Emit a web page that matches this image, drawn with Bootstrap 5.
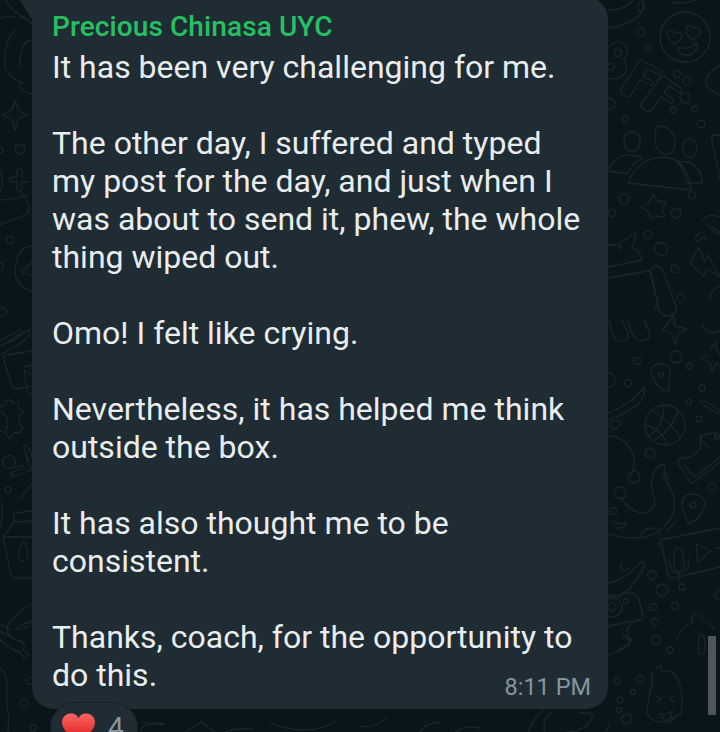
<!doctype html>
<html lang="en">
<head>
<meta charset="utf-8">
<title>Chat</title>
<link href="https://cdn.jsdelivr.net/npm/bootstrap@5.3.0/dist/css/bootstrap.min.css" rel="stylesheet">
<style>
html,body{height:732px;overflow:hidden;margin:0}
body{background:#0a151b;font-family:Roboto,"Liberation Sans",sans-serif;position:relative}
.wallpaper{position:absolute;left:0;top:0;width:720px;height:732px}
.wallpaper *{fill:none;stroke:#19262c;stroke-width:1.3;stroke-linecap:round;stroke-linejoin:round}
.chat-col{position:relative;width:576px;margin:-3px 0 0 32px}
.msg-tail{position:absolute;left:-14px;top:0;width:15px;height:24px}
.msg-bubble{background:#202c33;border-radius:0 22px 22px 22px;padding:10px 17px 15px 20px;color:#e9edef;font-size:32px;line-height:38px}
.msg-name{color:#25c063;font-size:28px;font-weight:500;line-height:40px;margin-bottom:1px;letter-spacing:.1px}
.msg-time{color:#8696a0;font-size:23.5px;line-height:27px;margin-bottom:-7px}
.react-pill{width:88px;height:50px;margin:-7px 0 0 18px;background:#202c33;border:1px solid #141f25;border-radius:25px;padding:10px 0 0 11px;gap:13px;position:relative}
.react-num{color:#8696a0;font-size:28px;line-height:30px}
.scroll-thumb{position:absolute;left:708px;top:636px;width:8px;height:79px;background:#4d575c}
</style>
</head>
<body>
<svg class="wallpaper" viewBox="0 0 720 732" aria-hidden="true">
<!-- face -->
<circle cx="685" cy="37" r="25"/><path d="M668 36c-3-5 3-8 7-3 5-2 9 1 6 6l-6 5c-3-1-5-4-7-8zM686 31c-1-5 6-6 8-3 4-1 8 2 6 6l-7 6c-3-2-6-5-7-9zM677 48c7 1 15-1 20-5 1 6-3 11-8 12-6 1-10-2-12-7z"/>
<path d="M608 28c16-2 28-8 34-16 4-6 2-11-1-12M640 2c-3 3-3 9 0 9 4 0 5-7 2-9M608 10c10 0 20-3 25-10M672 2c8 2 16 1 24-2"/>
<circle cx="641" cy="32" r="4"/><circle cx="648" cy="48" r="3"/><circle cx="677" cy="74" r="3.5"/><circle cx="687" cy="81" r="4"/><circle cx="685" cy="98" r="5"/><circle cx="673" cy="110" r="3"/><circle cx="695" cy="109" r="3"/><circle cx="701" cy="124" r="4"/><circle cx="625" cy="119" r="3"/>
<path d="M608 47l8-5c5-1 10 2 11 7 1 4 0 7-3 10 3 5 3 11 0 15-3 4-9 6-16 4"/><circle cx="618" cy="53" r="3.5"/><circle cx="611" cy="67" r="3.5"/>
<path d="M621 89l18-28c1-1 3-1 4 0l18 9c2 2 1 4-1 5l-13-6-4 7 9 5c2 2 0 5-2 4l-10-5-9 15c-2 2-4 2-6 1l-4-3c-1-1-1-3 0-4z"/>
<path d="M641 104l20-27c1-1 3-1 4 0l16 11c2 2 1 4-1 5l-11-7-5 7 8 6c2 2 0 5-2 4l-9-6-9 13c-2 2-4 2-6 1l-5-4c-1-1-1-2 0-3z"/>
<path d="M608 98c5 0 8 4 8 6 0 3-3 5-8 5"/>
<!-- people -->
<path d="M660 126c8 0 15 8 15 17 0 8-6 13-10 11-6-1-10-7-10-14s0-14 5-14zM631 132c7-1 10 5 9 10-1 6-4 10-8 10-5-1-8-5-8-11 0-6 3-9 7-9zM688 139c6-1 9 4 9 8s-2 9-5 11c-5 0-9-3-9-9 0-5 1-9 5-10zM609 171c1-9 10-17 23-16 5 0 9 2 11 3-8 4-13 10-15 16zM628 183c6-16 20-26 36-26 15 0 25 13 27 33l-45-5zM677 162c5-1 15-1 20 6 4 5 5 12 5 15h-15c-1-8-5-16-10-21z"/>
<circle cx="624" cy="199" r="5"/><circle cx="612" cy="213" r="3.5"/><circle cx="676" cy="213" r="5"/><circle cx="692" cy="195" r="3.5"/>
<path d="M653 195l5 6 8 1-4 7 3 8-8-1-6 3-2-7-8-5 7-3z"/>
<circle cx="648" cy="235" r="4"/><circle cx="661" cy="249" r="6.5"/><circle cx="675" cy="269" r="4"/><circle cx="681" cy="298" r="4"/>
<path d="M608 245h8l11-6c3-3 5-5 8-6 2 4-2 10-3 14 6 3 9 8 10 13l-34 7M608 278l40-7c2 0 3 1 3 3l7 30c0 2-2 4-4 6"/><circle cx="620" cy="247" r="1.5"/>
<path d="M650 270c4-5 11-5 13 1l13 36c1 5-3 9-9 9-4 0-7-3-8-6z"/>
<path d="M690 263l9-15 6 14 3-7 12 22-14-8-2 7z"/>
<path d="M702 220c5-5 11-6 18-3M700 232l-4 5c-2 3 2 5 4 3l4-3 2 2"/>
<path d="M708 224c3 6 5 8 12 10M712 225c2 4 5 6 8 7"/>
<path d="M720 135h-5c-3 0-4 2-3 5l8 40M720 65c-8 4-14 11-14 17 0 6 5 8 14 13M711 300c-3-5 1-11 9-14"/>
<!-- mid right -->
<path d="M609 320l4 14c2 7 8 9 13 6 2-2 3-5 2-8l-7-13M627 320l5 13c2 6 8 9 13 7 4-1 5-4 4-8l-5-12"/>
<path d="M668 323l5-7 2 10 12 3-9 5-2 10-5-11-9-3zM710 350l6-8 1 9 3 3M720 366l-4-3-4 9-2-10-10-4 9-3M702 323c0 5 3 8 10 10l8-2"/>
<circle cx="637" cy="361" r="3.5"/><circle cx="676" cy="357" r="6"/><circle cx="689" cy="366" r="3"/><circle cx="628" cy="383" r="3.5"/><circle cx="702" cy="388" r="3"/><circle cx="689" cy="402" r="2.5"/><circle cx="699" cy="419" r="3"/><circle cx="650" cy="453" r="5"/><circle cx="712" cy="487" r="4"/><circle cx="717" cy="437" r="2.5"/><circle cx="608" cy="380" r="7"/>
<path d="M652 375c-3-6 1-11 8-11 7 0 11 4 10 11l-2 17c-7-2-14-9-16-17z"/><circle cx="661" cy="375" r="2.5"/>
<path d="M702 400l16 9c3 2 1 5-1 4l-15-9c-3-2-2-5 0-4z"/>
<circle cx="665" cy="425" r="20"/><path d="M651 411c10 4 22 14 29 27M664 405c0 14-6 27-17 32M646 425c9 2 16 8 21 19M678 410c-4 14-12 24-24 30"/>
<path d="M678 463c0-3 2-5 5-5 8 0 14-4 17-10 1-4 1-7 0-12l18-4M700 436c2 5 5 9 10 11M678 463l11 18c1 2 3 2 5 1l26-20M684 466l11 11 25-20"/>
<path d="M608 413c14-5 28-15 36-26 2 4-1 12-6 17-6 6-20 13-30 16"/>
<path d="M611 422c-2 4 0 8 5 7l5-6c-2-3-7-3-10-1zM608 436c14 0 24 10 26 24 1 6-1 11-3 15"/><circle cx="634" cy="477" r="6"/><circle cx="620" cy="493" r="6"/><circle cx="613" cy="511" r="3.5"/>
<path d="M620 497c8 11 16 17 25 16 8-2 11-8 9-16-4-10-3-20 2-28 5-6 9-6 9-2-1 7 0 12 4 19 5 9 7 16 5 24-4 14-15 24-29 27-11 2-23 1-37-3M612 521c5 3 13 3 15 2-1 3-6 6-11 5"/>
<path d="M641 535c1-5 6-7 10-7 7 0 9 4 9 7M667 530c3-3 7-5 9-9"/>
<circle cx="665" cy="477" r="3"/>
<path d="M692 494c7 0 13 4 13 10 0 7-9 17-16 20-1-1-7-14-7-20 0-6 4-10 10-10z"/><circle cx="693" cy="505" r="3"/>
<path d="M660 540l60-12M659 548c0-3 0-5 2-6M661 542l6 28c0 6 3 8 6 8l47-11"/>
<path d="M674 553c0-6 8-7 9-1l1 13c0 7-9 8-10 2zM669 560c0 10 6 13 10 13 6 0 11-5 10-14M679 574v7M696 544l15 7-13 11zM716 548h4"/>
<path d="M608 583c14-2 26-13 33-21 4 0 4 3 2 7-5 10-13 20-21 26-4 3-9 4-14 5M622 564a4 4 0 1 0 6 5"/>
<circle cx="652" cy="575" r="4.5"/><circle cx="662" cy="590" r="6"/><circle cx="682" cy="587" r="3"/><circle cx="653" cy="607" r="3.5"/><circle cx="675" cy="606" r="3.5"/><circle cx="655" cy="622" r="3.5"/><circle cx="720" cy="595" r="5"/>
<path d="M608 595h10c3-1 5-3 9-2l7 1c3 1 4 3 5 6l4 16c0 2-1 4-3 4l-32 6"/><circle cx="612" cy="607" r="10"/><circle cx="612" cy="607" r="4"/><circle cx="626" cy="601" r="2.5"/>
<path d="M676 640c4-8 8-14 14-16 2-1 3-2 2-4-1-3 1-5 4-6 5-1 7 3 6 6 3 1 10 4 12 10M703 636c3 3 3 12 1 17-2 3-6 1-6-3l1-13c0-2 3-3 5-1z"/>
<!-- bottom right -->
<path d="M608 655c5-2 12-4 14-8M631 640c-2 4-8 9-12 11M622 634l8 7-3-12 7-8M622 634l10 5-4 7"/>
<circle cx="656" cy="640" r="4.5"/><circle cx="670" cy="650" r="3"/><circle cx="617" cy="681" r="3"/><circle cx="640" cy="679" r="3.5"/><circle cx="620" cy="700" r="3"/><circle cx="633" cy="692" r="2.5"/><circle cx="619" cy="710" r="2.5"/><circle cx="627" cy="719" r="5"/>
<path d="M656 669c3-4 5-4 5-1l1 4c9-3 13 1 17 10 4 10 3 20 2 32l-11 4M651 672c2 2 2 4 0 5 3 2 2 4 0 5 2 3 1 5 0 6l-4 20c-2 10 8 14 17 14 7 0 12-3 14-8"/>
<path d="M656 696l5 3-5 3M675 695l-6 4 6 3M660 714c4 1 8 0 12-3 0 4-2 8-4 9-4 1-6-2-8-6z"/>
<path d="M578 712l15 2c-2 10-12 18-26 18M605 732l5-8M545 732c-3-8 0-14 8-21M528 732c4-10 8-16 16-22"/>
<!-- left strip -->
<path d="M16 30c-8 5-12 18-11 35 0 8 8 15 19 18M32 24c-4-5-9-7-13-7M6 0c4 8 10 15 22 19M0 18c6-2 10-2 14-1M32 40c-8 0-12 10-13 27M19 82c1 7 6 11 13 12"/>
<path d="M15 100l3 10 9 5-9 4-3 11-3-11-10-4 10-5z"/><circle cx="20" cy="149" r="5"/>
<path d="M17 170v7h-6c-2 0-2 5 0 5h6v7c0 2 5 2 5 0v-7h7M22 177v-6c0-3-5-3-5-1M0 147a3 3 0 0 1 0 6M0 170c3 5 3 18 0 22"/>
<path d="M0 225c12-5 22-8 28-12 3-7-3-20-12-24M0 200c7 0 18-2 28-5"/><circle cx="10" cy="240" r="3.5"/><circle cx="0" cy="266" r="3.5"/>
<path d="M32 246c-10 0-15 8-17 22-1 10 5 19 17 24M32 262l-8 8h-3M22 272l10 4"/><circle cx="3" cy="312" r="4"/>
<path d="M0 346c9-3 20-9 26-15 3-2 5 1 3 4-5 8-17 13-29 20M0 341l20-11 4 2M8 342l13-9"/>
<path d="M32 351l-25 4c-3 0-4 2-3 5l8 26c1 3 3 3 5 3l15-3M24 367c2-1 5-2 8-2M24 370l3 22c0 2 3 2 5 2M24 370l8 5"/>
<path d="M0 406c6 1 7-2 6-6 3-1 6 0 8 3 3-1 5 0 5 2l-1 3c3 1 5 3 5 5l-4 3c1 3 1 5 0 8l4 3-3 6c-2 0-4 0-5-1-2 3-4 5-6 6-2-2-3-4-3-6-3 0-5 0-6-1M0 412a12 12 0 0 1 6 18"/>
<circle cx="9" cy="462" r="6.5"/><circle cx="8" cy="490" r="3"/>
<path d="M26 445c3 4 6 12 7 16M32 470l-20 7-1-4 12-6-2-2-8 3M25 455l7 15M21 498l11-14M26 445c-2 0-3 1-2 3l5 13"/>
<path d="M0 503c2 2 3 5 1 20 0 2-1 3-1 4M14 513l18-2M14 522v-7M14 522l18-1M14 522l-11 15 8 38c0 2 2 3 4 3h17M3 537h29"/><path d="M23 541c3 3 5 9 5 13 0 5-3 7-5 7-3 0-5-3-5-7 0-4 3-9 5-13z"/>
<path d="M32 604c-8 3-14 8-18 14-3 2-5 4-6 7-1 7-1 10 3 11M32 622c-9 1-14 4-16 7 6 0 10-1 13-3"/>
<path d="M0 631c8 5 14 9 20 10 5 1 5 6 3 9 2 1 4 3 5 5l-4 3-4-6c-8-2-15-7-20-13M0 625c4 1 8 3 11 5"/>
<path d="M32 677c-3 1-6 2-6 4 0 2 3 3 6 4M0 668c4 3 7 9 7 16 0 10-1 21 1 27 1 3 1 7 0 21"/><circle cx="24" cy="703" r="4"/><circle cx="33" cy="728" r="3"/>
<!-- bottom under bubble -->
<path d="M140 730c5-6 10-7 22-7M142 722c6 2 14 3 22 2M185 732l16-10 14 10M225 732c10-4 22-4 28-2M270 722c6 4 18 7 32 8 15 0 26-3 34-9M360 726c10 2 20-2 26-8M420 732c3-6 9-9 20-10M455 732c6-5 14-6 25-4"/>
</svg>
<div class="scroll-thumb"></div>
<div class="chat-col">
<svg class="msg-tail" viewBox="0 0 15 24" aria-hidden="true"><path d="M15 0H1c-1 0-1 1 0 2l14 22z" fill="#202c33"/></svg>
<div class="msg-bubble">
<div class="msg-name">Precious Chinasa UYC</div>
<div>It has been very challenging for me.<br><br>The other day, I suffered and typed<br>my post for the day, and just when I<br>was about to send it, phew, the whole<br>thing wiped out.<br><br>Omo! I felt like crying.<br><br>Nevertheless, it has helped me think<br>outside the box.<br><br>It has also thought me to be<br>consistent.<br><br>Thanks, coach, for the opportunity to</div>
<div class="d-flex justify-content-between align-items-end"><span>do this.</span><span class="msg-time">8:11 PM</span></div>
</div>
<div class="react-pill d-flex align-items-start">
<svg width="33" height="30" viewBox="0 0 34 30" aria-hidden="true"><defs><linearGradient id="hg" x1="0" y1="0" x2="0" y2="1"><stop offset="0" stop-color="#ff6561"/><stop offset="1" stop-color="#d7141a"/></linearGradient></defs><path d="M17 30C9 24 0 17 0 9 0 3 5 0 9 0c4 0 7 2 8 5 1-3 4-5 8-5 4 0 9 3 9 9 0 8-9 15-17 21z" fill="url(#hg)"/></svg>
<span class="react-num">4</span>
</div>
</div>
</body>
</html>
